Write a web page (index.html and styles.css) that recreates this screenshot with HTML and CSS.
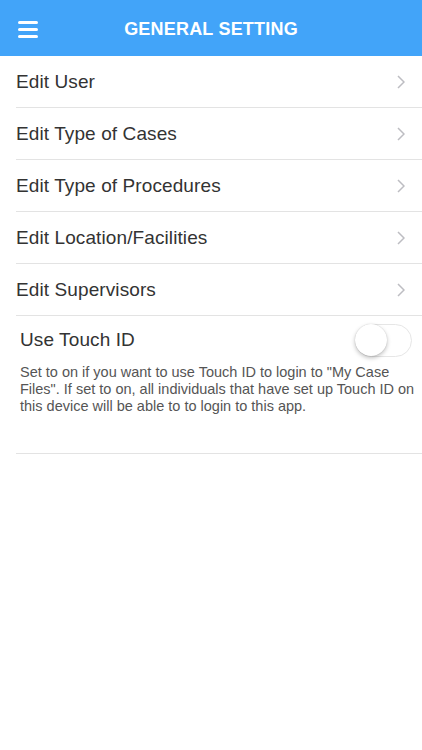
FILE: index.html
```html
<!DOCTYPE html>
<html lang="en">
<head>
<meta charset="utf-8">
<title>General Setting</title>
<link rel="stylesheet" href="styles.css">
</head>
<body>
<header class="topbar">
  <button class="menu-btn" aria-label="Menu">
    <span></span><span></span><span></span>
  </button>
  <h1 class="title">GENERAL SETTING</h1>
</header>
<main>
  <ul class="menu-list">
    <li class="menu-item"><span>Edit User</span><svg class="chev" viewBox="0 0 8 14"><path d="M1 1l6 6-6 6"/></svg></li>
    <li class="menu-item"><span>Edit Type of Cases</span><svg class="chev" viewBox="0 0 8 14"><path d="M1 1l6 6-6 6"/></svg></li>
    <li class="menu-item"><span>Edit Type of Procedures</span><svg class="chev" viewBox="0 0 8 14"><path d="M1 1l6 6-6 6"/></svg></li>
    <li class="menu-item"><span>Edit Location/Facilities</span><svg class="chev" viewBox="0 0 8 14"><path d="M1 1l6 6-6 6"/></svg></li>
    <li class="menu-item"><span>Edit Supervisors</span><svg class="chev" viewBox="0 0 8 14"><path d="M1 1l6 6-6 6"/></svg></li>
  </ul>
  <section class="touch">
    <div class="touch-row">
      <span class="touch-label">Use Touch ID</span>
      <span class="switch"><span class="knob"></span></span>
    </div>
    <p class="touch-note">Set to on if you want to use Touch ID to login to "My Case Files". If set to on, all individuals that have set up Touch ID on this device will be able to to login to this app.</p>
  </section>
</main>
</body>
</html>
```
FILE: styles.css
```css
* { box-sizing: border-box; }

html, body {
  margin: 0;
  padding: 0;
  background: #fff;
  font-family: "Liberation Sans", Arial, sans-serif;
  color: #333;
}

.topbar {
  height: 56px;
  background: #42a4f9;
  display: flex;
  align-items: center;
  justify-content: center;
  position: relative;
}

.menu-btn {
  position: absolute;
  left: 18px;
  top: 21px;
  width: 20px;
  height: 17px;
  padding: 0;
  border: 0;
  background: none;
  display: flex;
  flex-direction: column;
  justify-content: space-between;
}

.menu-btn span {
  display: block;
  height: 3px;
  border-radius: 2px;
  background: #fff;
}

.title {
  margin: 0;
  color: #fff;
  font-size: 18px;
  font-weight: bold;
  letter-spacing: 0.2px;
  padding-top: 3px;
}

.menu-list {
  list-style: none;
  margin: 0;
  padding: 0 0 0 16px;
}

.menu-item {
  height: 52px;
  display: flex;
  align-items: center;
  justify-content: space-between;
  border-bottom: 1px solid #e3e3e3;
  font-size: 19px;
  letter-spacing: 0.1px;
  color: #333;
  padding: 1px 17px 0 0;
}

.chev {
  width: 8px;
  height: 14px;
  fill: none;
  stroke: #bdbdc2;
  stroke-width: 1.5;
}

.touch {
  margin-left: 16px;
  border-bottom: 1px solid #e3e3e3;
  padding: 0 6px 38px 4px;
}

.touch-row {
  height: 48px;
  display: flex;
  align-items: center;
  justify-content: space-between;
  padding-right: 4px;
}

.touch-label {
  font-size: 19px;
  letter-spacing: 0.1px;
  color: #333;
}

.switch {
  width: 57px;
  height: 33px;
  border-radius: 17px;
  border: 1.5px solid #e6e6e6;
  background: #fff;
  position: relative;
}

.knob {
  position: absolute;
  left: -1px;
  top: -1px;
  width: 32px;
  height: 32px;
  border-radius: 50%;
  background: #fff;
  box-shadow: 0 2px 4px rgba(0,0,0,0.25), 0 0 1px rgba(0,0,0,0.2);
}

.touch-note {
  margin: 0;
  font-size: 14.5px;
  line-height: 17px;
  color: #555;
}
```
